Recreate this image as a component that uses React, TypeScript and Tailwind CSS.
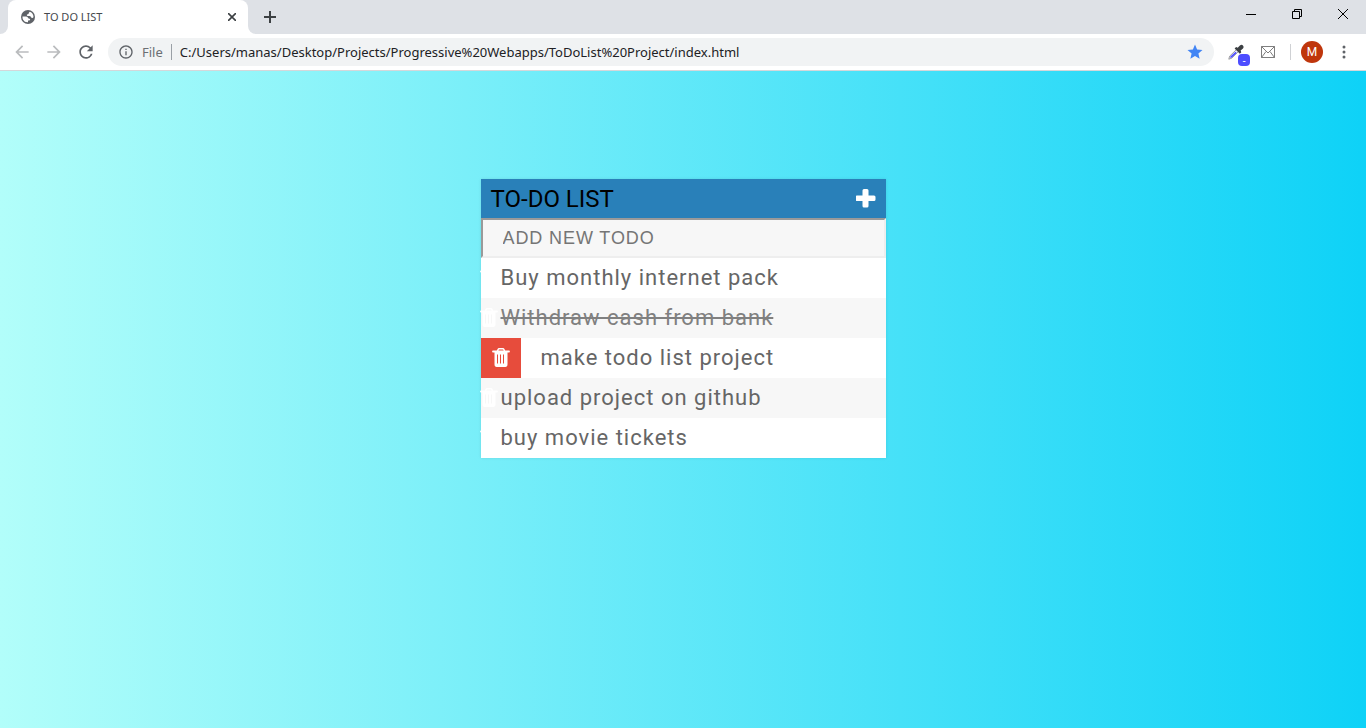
import React from 'react';
import { MdStar, MdArrowBack, MdArrowForward, MdRefresh, MdInfoOutline } from 'react-icons/md';

type Todo = { text: string; done?: boolean; hovered?: boolean };

const todos: Todo[] = [
  { text: 'Buy monthly internet pack' },
  { text: 'Withdraw cash from bank', done: true },
  { text: 'make todo list project', hovered: true },
  { text: 'upload project on github' },
  { text: 'buy movie tickets' },
];

function Trash() {
  return (
    <svg viewBox="0 0 18 20" className="h-5 w-[18px] shrink-0" fill="none" stroke="currentColor" aria-hidden="true">
      <path d="M1 3.500h16" strokeWidth="1.8" strokeLinecap="round" />
      <path d="M5.300 3.500l.8-2q.3-.8 1.200-.8h3.400q.9 0 1.200.8l.8 2" strokeWidth="1.500" />
      <path d="M2.500 3.500v12.800q0 2.700 2.200 2.700h8.600q2.200 0 2.200-2.700V3.500zM5 6.500v9h1v-9zM8 6.500v9h1v-9zM11 6.500v9h1v-9z" fill="currentColor" fillRule="evenodd" stroke="none" />
    </svg>
  );
}

function Plus() {
  return (
    <svg viewBox="0 0 20 20" className="size-5" fill="currentColor" aria-hidden="true">
      <path d="M8 0h3q1.500 0 1.500 1.500V6.500H18q1.500 0 1.500 1.500v2.500q0 1.500-1.500 1.500h-5.500v5q0 1.500-1.500 1.500H8q-1.500 0-1.500-1.500v-5H1Q-.5 12-.5 10.500V8Q-.5 6.500 1 6.500h5.500v-5Q6.500 0 8 0z" />
    </svg>
  );
}

function Globe() {
  return (
    <svg viewBox="0 0 14 14" className="size-3.5" aria-hidden="true">
      <circle cx="7" cy="7" r="7" fill="#5f6368" />
      <path d="M1.500 6.500h3.200q1.800 0 2.300 1.200.4 1 1.500 1 .8.200.6 1-.2.700-1 .7H7v1.900Q3.700 12.600 2.100 9.800 1.300 8.300 1.500 6.500z" fill="#fff" />
      <path d="M8.800 1.800Q12.400 3 12.500 7q-.4 1-1.500.9-.9-.1-1.200-1.100-.3-.8-1.300-.8H6.800q-1 0-1-.9t1-.9q.9-.1.900-1 .1-.8 1.100-1.400z" fill="#fff" />
    </svg>
  );
}

function Dropper() {
  return (
    <svg viewBox="0 0 16 16" className="size-4" aria-hidden="true">
      <path d="M.8 15.200l.8-3L8.500 5.500l2 2-6.800 6.700z" fill="#e8e8ff" stroke="#8a8a8a" strokeWidth=".8" />
      <path d="M2.200 13.900l.5-1.600 4.800-4.600 1.200 1.200-4.800 4.600z" fill="#4d4dff" />
      <path d="M6.600 4.600l1.500-1.500 1.600.7L11.900 1.500q1.800-1.300 3-.1 1.300 1.300.1 3.100l-2.400 2.100.7 1.600-1.500 1.500z" fill="#3c4043" />
    </svg>
  );
}

function Envelope() {
  return (
    <svg viewBox="0 0 16 12" className="h-3 w-4" fill="none" stroke="#707070" strokeWidth=".9" aria-hidden="true">
      <path d="M1.500.5h13v11h-13zM1.500.5L8 7l6.500-6.500M1.500 11.500l4.500-6M14.500 11.500l-4.500-6" />
    </svg>
  );
}

function Browser() {
  return (
    <header className="shrink-0 font-['Noto_Sans','Open_Sans',sans-serif]">
      <div className="flex h-[34px] items-stretch bg-[#dee1e6] pl-2">
        <div className="relative flex w-60 items-center rounded-t-lg bg-white pl-[13px] pr-2">
          <span className="absolute -left-2 bottom-0 size-2 bg-white">
            <span className="block size-2 rounded-br-lg bg-[#dee1e6]" />
          </span>
          <span className="absolute -right-2 bottom-0 size-2 bg-white">
            <span className="block size-2 rounded-bl-lg bg-[#dee1e6]" />
          </span>
          <Globe />
          <span className="ml-[9px] flex-1 text-[11px] text-[#45494d]">TO DO LIST</span>
          <button type="button" aria-label="Close tab" className="grid size-4 place-items-center text-[#3c4043]">
            <svg viewBox="0 0 8 8" className="size-2" stroke="currentColor" strokeWidth="1.6"><path d="M0 0l8 8M8 0L0 8" /></svg>
          </button>
        </div>
        <button type="button" aria-label="New tab" className="ml-3 grid w-5 place-items-center text-[#3c4043]">
          <svg viewBox="0 0 12 12" className="size-3" stroke="currentColor" strokeWidth="2"><path d="M6 0v12M0 6h12" /></svg>
        </button>
        <div className="ml-auto flex h-7 text-black">
          <button type="button" aria-label="Minimize" className="grid w-[46px] place-items-center">
            <svg viewBox="0 0 10 10" className="size-[10px]" stroke="currentColor"><path d="M0 5.500h10" /></svg>
          </button>
          <button type="button" aria-label="Restore" className="grid w-[46px] place-items-center">
            <svg viewBox="0 0 10 10" className="size-[10px]" fill="none" stroke="currentColor"><path d="M.5 2.500h7v7h-7zM2.500 2.500v-2h7v7h-2" /></svg>
          </button>
          <button type="button" aria-label="Close" className="grid w-[46px] place-items-center">
            <svg viewBox="0 0 10 10" className="size-[10px]" stroke="currentColor"><path d="M0 0l10 10M10 0L0 10" /></svg>
          </button>
        </div>
      </div>
      <div className="flex h-[37px] items-center border-b border-[#d5d7da] bg-white pl-3 pr-[13px]">
        <button type="button" aria-label="Back" className="text-[#babcbe]"><MdArrowBack className="size-5" /></button>
        <button type="button" aria-label="Forward" className="ml-3 text-[#babcbe]"><MdArrowForward className="size-5" /></button>
        <button type="button" aria-label="Reload" className="ml-3 text-[#5f6368]"><MdRefresh className="size-5" /></button>
        <div className="ml-3 flex h-7 min-w-0 flex-1 items-center rounded-full bg-[#f1f3f4] px-2.5 text-[13px]">
          <MdInfoOutline className="size-4 shrink-0 text-[#5f6368]" />
          <span className="ml-2 pt-px text-[#6b6f73]">File</span>
          <span className="ml-2 h-4 w-px shrink-0 bg-[#9aa0a6]" />
          <input
            aria-label="Address"
            readOnly
            value="C:/Users/manas/Desktop/Projects/Progressive%20Webapps/ToDoList%20Project/index.html"
            className="ml-2 min-w-0 flex-1 bg-transparent pt-px text-[#202124] outline-none"
          />
          <button type="button" aria-label="Bookmark" className="text-[#4285f4]"><MdStar className="size-[18px]" /></button>
        </div>
        <button type="button" aria-label="Color picker" className="relative ml-3.5">
          <Dropper />
          <span className="absolute left-2.5 top-2.5 flex size-3 items-center justify-center rounded-sm bg-[#4d4dff] text-[10px] text-white">-</span>
        </button>
        <button type="button" aria-label="Mail" className="ml-4"><Envelope /></button>
        <span className="ml-3.5 h-4 w-px bg-[#cfd1d4]" />
        <button type="button" aria-label="Profile" className="ml-2.5 grid size-[22px] place-items-center rounded-full bg-[#bf360c] font-[Roboto,sans-serif] text-xs text-white">M</button>
        <button type="button" aria-label="Menu" className="ml-3 grid h-5 w-[18px] place-items-center text-[#5f6368]">
          <svg viewBox="0 0 4 14" className="h-3.5 w-1" fill="currentColor"><circle cx="2" cy="2" r="1.500" /><circle cx="2" cy="7" r="1.500" /><circle cx="2" cy="12" r="1.500" /></svg>
        </button>
      </div>
    </header>
  );
}

export default function App() {
  return (
    <div className="flex min-h-screen flex-col bg-[#dee1e6]">
      <Browser />
      <main className="flex-1 bg-linear-to-r/srgb from-[#b2fefa] to-[#0ed2f7] pt-[108px] font-[Roboto,sans-serif]">
        <section className="mx-auto w-[405px] max-w-full bg-[#f7f7f7] shadow-[0_0_3px_rgba(0,0,0,0.1)]">
          <div className="flex h-[39px] items-center justify-between bg-[#2980b9] px-2.5">
            <h1 className="text-2xl text-black">TO-DO LIST</h1>
            <button type="button" aria-label="Toggle new todo" className="text-white"><Plus /></button>
          </div>
          <input
            type="text"
            aria-label="Add new todo"
            placeholder="ADD NEW TODO"
            className="block h-10 w-full border-2 border-t-[#9a9a9a] border-l-[#9a9a9a] border-r-[#eee] border-b-[#eee] bg-[#f7f7f7] px-5 font-['Liberation_Sans',sans-serif] text-lg tracking-wider outline-none placeholder:text-[#757575]"
          />
          <ul>
            {todos.map((todo) => (
              <li key={todo.text} className="relative flex h-10 items-center text-[22px] tracking-[1px] text-[#666] odd:bg-white even:bg-[#f7f7f7]">
                {todo.hovered ? (
                  <button type="button" aria-label="Delete" className="grid size-10 place-items-center bg-[#e74c3c] text-white"><Trash /></button>
                ) : (
                  <span className="absolute -left-px text-white"><Trash /></span>
                )}
                <span className={todo.done ? 'relative pb-0.5 pl-5 text-[#808080]' : 'relative pb-0.5 pl-5'}>
                  <span className={todo.done ? 'line-through' : ''}>{todo.text}</span>
                </span>
              </li>
            ))}
          </ul>
        </section>
      </main>
    </div>
  );
}
